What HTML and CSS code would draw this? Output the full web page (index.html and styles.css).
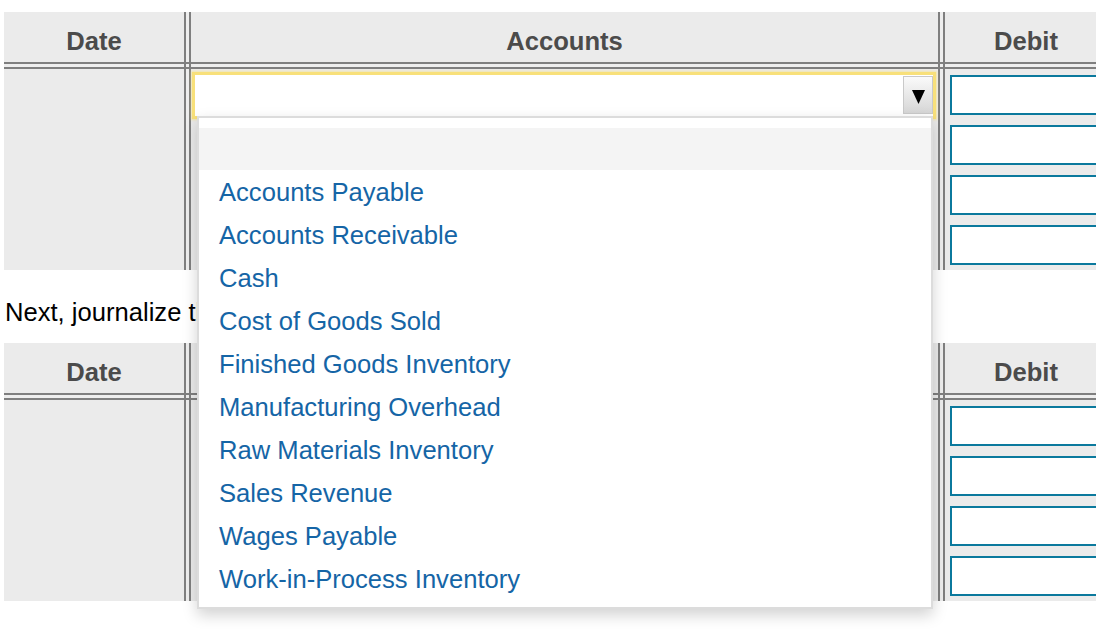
FILE: index.html
```html
<!DOCTYPE html>
<html lang="en">
<head>
<meta charset="utf-8">
<title>Journal entry</title>
<link rel="stylesheet" href="styles.css">
</head>
<body>
<div class="page">
  <div class="journal">
    <div class="cell head">Date</div>
    <div class="vdiv"></div>
    <div class="cell head">Accounts</div>
    <div class="vdiv"></div>
    <div class="cell head">Debit</div>

    <div class="hdiv"></div>
    <div class="cross"></div>
    <div class="hdiv"></div>
    <div class="cross"></div>
    <div class="hdiv"></div>

    <div class="cell body"></div>
    <div class="vdiv"></div>
    <div class="cell body accounts">
      <div class="select focused">
        <span class="select-btn"><svg width="13" height="14" viewBox="0 0 13 14"><polygon points="0,0 13,0 6.5,14" fill="#000"/></svg></span>
        <ul class="menu">
          <li class="opt active">&nbsp;</li>
          <li class="opt">Accounts Payable</li>
          <li class="opt">Accounts Receivable</li>
          <li class="opt">Cash</li>
          <li class="opt">Cost of Goods Sold</li>
          <li class="opt">Finished Goods Inventory</li>
          <li class="opt">Manufacturing Overhead</li>
          <li class="opt">Raw Materials Inventory</li>
          <li class="opt">Sales Revenue</li>
          <li class="opt">Wages Payable</li>
          <li class="opt">Work-in-Process Inventory</li>
        </ul>
      </div>
    </div>
    <div class="vdiv"></div>
    <div class="cell body debit">
      <input class="amount" type="text">
      <input class="amount" type="text">
      <input class="amount" type="text">
      <input class="amount" type="text">
    </div>
  </div>

  <p class="note">Next, journalize the</p>

  <div class="journal">
    <div class="cell head">Date</div>
    <div class="vdiv"></div>
    <div class="cell head">Accounts</div>
    <div class="vdiv"></div>
    <div class="cell head">Debit</div>

    <div class="hdiv"></div>
    <div class="cross"></div>
    <div class="hdiv"></div>
    <div class="cross"></div>
    <div class="hdiv"></div>

    <div class="cell body"></div>
    <div class="vdiv"></div>
    <div class="cell body accounts"></div>
    <div class="vdiv"></div>
    <div class="cell body debit">
      <input class="amount" type="text">
      <input class="amount" type="text">
      <input class="amount" type="text">
      <input class="amount" type="text">
    </div>
  </div>
</div>
</body>
</html>
```

FILE: styles.css
```css
html {
  overflow: hidden;
  background: #ffffff;
}

body {
  margin: 0;
  padding: 0;
  font-family: "Liberation Sans", Arial, Helvetica, sans-serif;
  font-size: 25.6px;
  color: #000;
}

.page {
  padding: 12px 0 28px 4px;
  width: 1103px;
}

.journal {
  display: grid;
  grid-template-columns: 180px 7px 747px 7px 162px;
  grid-template-rows: 50px 7px 201px;
}

.cell {
  background: #ebebeb;
}

.head {
  box-sizing: border-box;
  padding-top: 9px;
  line-height: 40px;
  text-align: center;
  font-weight: bold;
  color: #4b4b4b;
}

.vdiv {
  background: linear-gradient(to right, #7f7f7f 0 2px, #eeeeee 2px 5px, #7f7f7f 5px 7px);
}

.hdiv {
  background: linear-gradient(to bottom, #7f7f7f 0 2px, #eeeeee 2px 5px, #7f7f7f 5px 7px);
}

.cross {
  background:
    linear-gradient(to right, #7f7f7f 0 2px, transparent 2px 5px, #7f7f7f 5px 7px),
    linear-gradient(to bottom, #7f7f7f 0 2px, #eeeeee 2px 5px, #7f7f7f 5px 7px);
}

.accounts {
  box-sizing: border-box;
  padding: 6px 5px 0 4px;
}

.select {
  position: relative;
  height: 41px;
  background: #ffffff;
  display: flex;
  justify-content: flex-end;
  align-items: flex-start;
}

.select.focused {
  box-shadow: 0 0 0 3px #f8e07a, 0 0 2px 4px rgba(248, 224, 122, 0.55);
}

.select-btn {
  box-sizing: border-box;
  width: 30px;
  height: 38px;
  margin-top: 1px;
  border: 1px solid #c9c9c9;
  background: linear-gradient(to bottom, #fafafa, #d6d6d6);
  display: flex;
  justify-content: center;
  align-items: flex-start;
  padding-top: 13px;
}

.select-btn svg {
  display: block;
}

.menu {
  position: absolute;
  top: 41px;
  left: 2px;
  z-index: 10;
  box-sizing: border-box;
  width: 736px;
  margin: 0;
  padding: 10px 0 6px;
  list-style: none;
  background: #ffffff;
  border: 2px solid #dcdcdc;
  box-shadow: 0 6px 14px rgba(0, 0, 0, 0.18);
}

.opt {
  height: 43px;
  line-height: 43px;
  padding-left: 20px;
  color: #1565a6;
  white-space: nowrap;
}

.opt.active {
  height: 42px;
  line-height: 42px;
  background: #f4f4f4;
  margin-bottom: 1px;
}

.debit {
  box-sizing: border-box;
  padding: 6px 0 0 5px;
}

.amount {
  display: block;
  box-sizing: border-box;
  width: 100%;
  height: 40px;
  margin: 0 0 10px;
  padding: 0 6px;
  border: 2px solid #0b799d;
  border-radius: 0;
  background: #ffffff;
  font: inherit;
  outline: none;
}

.note {
  margin: 28px 0 16px;
  padding-left: 1px;
  line-height: 29.4px;
}
```
